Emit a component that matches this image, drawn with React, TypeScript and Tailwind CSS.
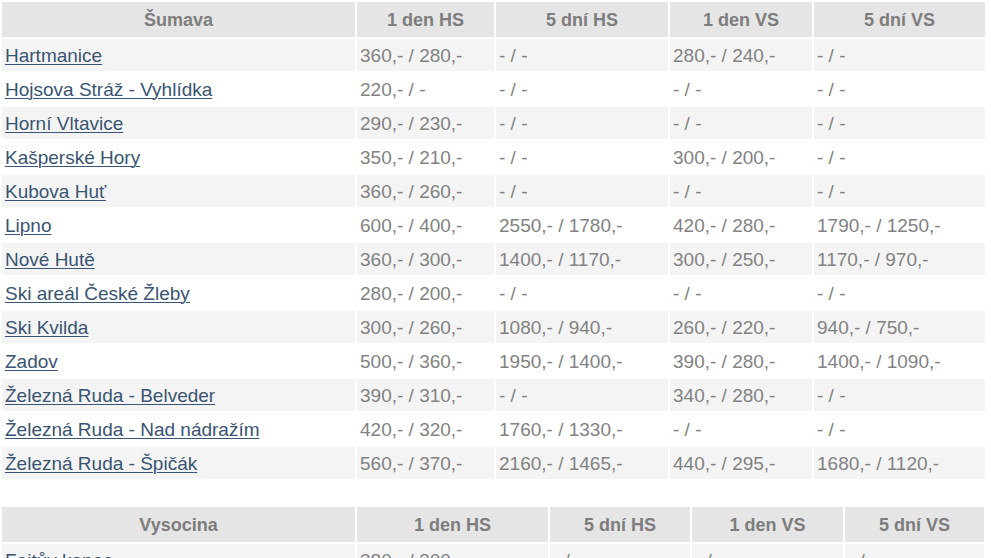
import React from "react";

type Row = [string, string, string, string, string];

const sumava: Row[] = [
  ["Hartmanice", "360,- / 280,-", "- / -", "280,- / 240,-", "- / -"],
  ["Hojsova Stráž - Vyhlídka", "220,- / -", "- / -", "- / -", "- / -"],
  ["Horní Vltavice", "290,- / 230,-", "- / -", "- / -", "- / -"],
  ["Kašperské Hory", "350,- / 210,-", "- / -", "300,- / 200,-", "- / -"],
  ["Kubova Huť", "360,- / 260,-", "- / -", "- / -", "- / -"],
  ["Lipno", "600,- / 400,-", "2550,- / 1780,-", "420,- / 280,-", "1790,- / 1250,-"],
  ["Nové Hutě", "360,- / 300,-", "1400,- / 1170,-", "300,- / 250,-", "1170,- / 970,-"],
  ["Ski areál České Žleby", "280,- / 200,-", "- / -", "- / -", "- / -"],
  ["Ski Kvilda", "300,- / 260,-", "1080,- / 940,-", "260,- / 220,-", "940,- / 750,-"],
  ["Zadov", "500,- / 360,-", "1950,- / 1400,-", "390,- / 280,-", "1400,- / 1090,-"],
  ["Železná Ruda - Belveder", "390,- / 310,-", "- / -", "340,- / 280,-", "- / -"],
  ["Železná Ruda - Nad nádražím", "420,- / 320,-", "1760,- / 1330,-", "- / -", "- / -"],
  ["Železná Ruda - Špičák", "560,- / 370,-", "2160,- / 1465,-", "440,- / 295,-", "1680,- / 1120,-"],
];

const vysocina: Row[] = [
  ["Fajtův kopec", "380,- / 300,-", "- / -", "- / -", "- / -"],
  ["Harusův kopec", "350,- / 280,-", "- / -", "- / -", "- / -"],
];

function PriceTable({
  title,
  rows,
  widths,
  className,
}: {
  title: string;
  rows: Row[];
  widths: string[];
  className: string;
}) {
  const heads = [title, "1 den HS", "5 dní HS", "1 den VS", "5 dní VS"];
  return (
    <table className={"table-fixed border-separate border-spacing-[2px] " + className}>
      <colgroup>
        {widths.map((w, i) => (
          <col key={i} className={w} />
        ))}
      </colgroup>
      <thead>
        <tr>
          {heads.map((h, i) => (
            <th
              key={i}
              className="h-[35px] bg-[#e5e5e5] text-center text-[18px] font-bold text-[#7d7d7d] p-0"
            >
              {h}
            </th>
          ))}
        </tr>
      </thead>
      <tbody>
        {rows.map((r, ri) => (
          <tr key={ri} className={ri % 2 === 0 ? "bg-[#f4f4f4]" : "bg-white"}>
            <td className="h-[32px] pl-[3px] pr-0 py-0 whitespace-nowrap">
              <a href="#" className="text-[#3a5472] underline underline-offset-[2px] decoration-1">
                {r[0]}
              </a>
            </td>
            {r.slice(1).map((c, ci) => (
              <td key={ci} className="h-[32px] pl-[3px] pr-0 py-0 whitespace-nowrap text-[#828282]">
                {c}
              </td>
            ))}
          </tr>
        ))}
      </tbody>
    </table>
  );
}

export default function App() {
  return (
    <div
      className="w-[991px] h-[558px] overflow-hidden bg-white text-[19px] leading-none"
      style={{ fontFamily: '"Liberation Sans", Arial, sans-serif' }}
    >
      <PriceTable
        title="Šumava"
        rows={sumava}
        className="w-[987px]"
        widths={["w-[353px]", "w-[137px]", "w-[172px]", "w-[142px]", "w-[171px]"]}
      />
      <div className="h-[24px]" />
      <PriceTable
        title="Vysocina"
        rows={vysocina}
        className="w-[986px]"
        widths={["w-[353px]", "w-[191px]", "w-[140px]", "w-[151px]", "w-[139px]"]}
      />
    </div>
  );
}
